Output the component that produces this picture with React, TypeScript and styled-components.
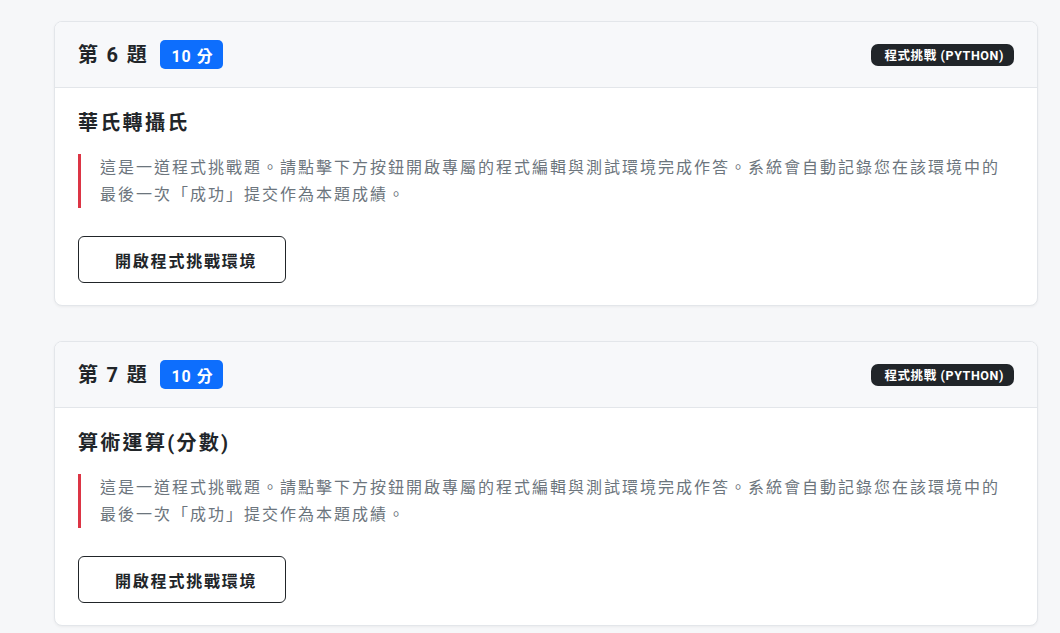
import React from "react";
import styled, { createGlobalStyle } from "styled-components";

const GlobalStyle = createGlobalStyle`
  html, body {
    margin: 0;
    padding: 0;
    background: #f6f7f9;
    font-family: Roboto, "Noto Sans CJK TC", sans-serif;
    color: #212529;
  }
`;

const Page = styled.div`
  display: flex;
  flex-direction: column;
  gap: 35px;
  padding: 21px 22px 20px 54px;
`;

const Card = styled.section`
  background: #fff;
  border: 1px solid #e3e6ea;
  border-radius: 8px;
  box-shadow: 0 1px 3px rgba(0, 0, 0, 0.05);
  overflow: hidden;
`;

const Header = styled.div`
  display: flex;
  align-items: center;
  justify-content: space-between;
  padding: 18px 23px 18px 23px;
  background: #f7f8fa;
  border-bottom: 1px solid #e3e6ea;
`;

const HeaderLeft = styled.div`
  display: flex;
  align-items: center;
  gap: 12px;
`;

const QNum = styled.h5`
  margin: 0;
  font-size: 20px;
  font-weight: 700;
  line-height: 1.2;
  letter-spacing: 1.8px;
  color: #212529;
`;

const Score = styled.span`
  display: inline-flex;
  align-items: center;
  height: 29px;
  padding: 0 9px 0 11px;
  border-radius: 5px;
  background: #0d6efd;
  color: #fff;
  font-size: 16px;
  font-weight: 700;
  letter-spacing: 1px;
`;

const TypeBadge = styled.span`
  display: inline-flex;
  align-items: center;
  height: 22px;
  padding: 0 10px 0 13px;
  border-radius: 7px;
  background: #212529;
  color: #fff;
  font-size: 12.5px;
  font-weight: 700;
  letter-spacing: 0.6px;
`;

const Body = styled.div`
  padding: 23px 23px 22px 23px;
`;

const Title = styled.h4`
  margin: 0 0 19px;
  font-size: 20px;
  font-weight: 700;
  line-height: 1.2;
  letter-spacing: 2.3px;
  color: #212529;
`;

const Note = styled.blockquote`
  margin: 0 0 28px;
  padding: 0 0 0 19px;
  border-left: 3px solid #dc3545;
  color: #6c757d;
  font-size: 16px;
  line-height: 27px;
  letter-spacing: 2px;
  max-width: 925px;
`;

const LaunchButton = styled.button`
  display: inline-flex;
  align-items: center;
  height: 47px;
  padding: 0 28px 0 36px;
  border: 1px solid #212529;
  border-radius: 6px;
  background: #fff;
  color: #212529;
  font-family: inherit;
  font-size: 16px;
  font-weight: 700;
  letter-spacing: 1.8px;
  cursor: pointer;
`;

const questions = [
  { no: 6, score: 10, title: "華氏轉攝氏" },
  { no: 7, score: 10, title: "算術運算(分數)" },
];

const desc =
  "這是一道程式挑戰題。請點擊下方按鈕開啟專屬的程式編輯與測試環境完成作答。系統會自動記錄您在該環境中的最後一次「成功」提交作為本題成績。";

export default function App() {
  return (
    <>
      <GlobalStyle />
      <Page>
        {questions.map((q) => (
          <Card key={q.no}>
            <Header>
              <HeaderLeft>
                <QNum>第 {q.no} 題</QNum>
                <Score>{q.score} 分</Score>
              </HeaderLeft>
              <TypeBadge>程式挑戰 (PYTHON)</TypeBadge>
            </Header>
            <Body>
              <Title>{q.title}</Title>
              <Note>{desc}</Note>
              <LaunchButton>開啟程式挑戰環境</LaunchButton>
            </Body>
          </Card>
        ))}
      </Page>
    </>
  );
}
